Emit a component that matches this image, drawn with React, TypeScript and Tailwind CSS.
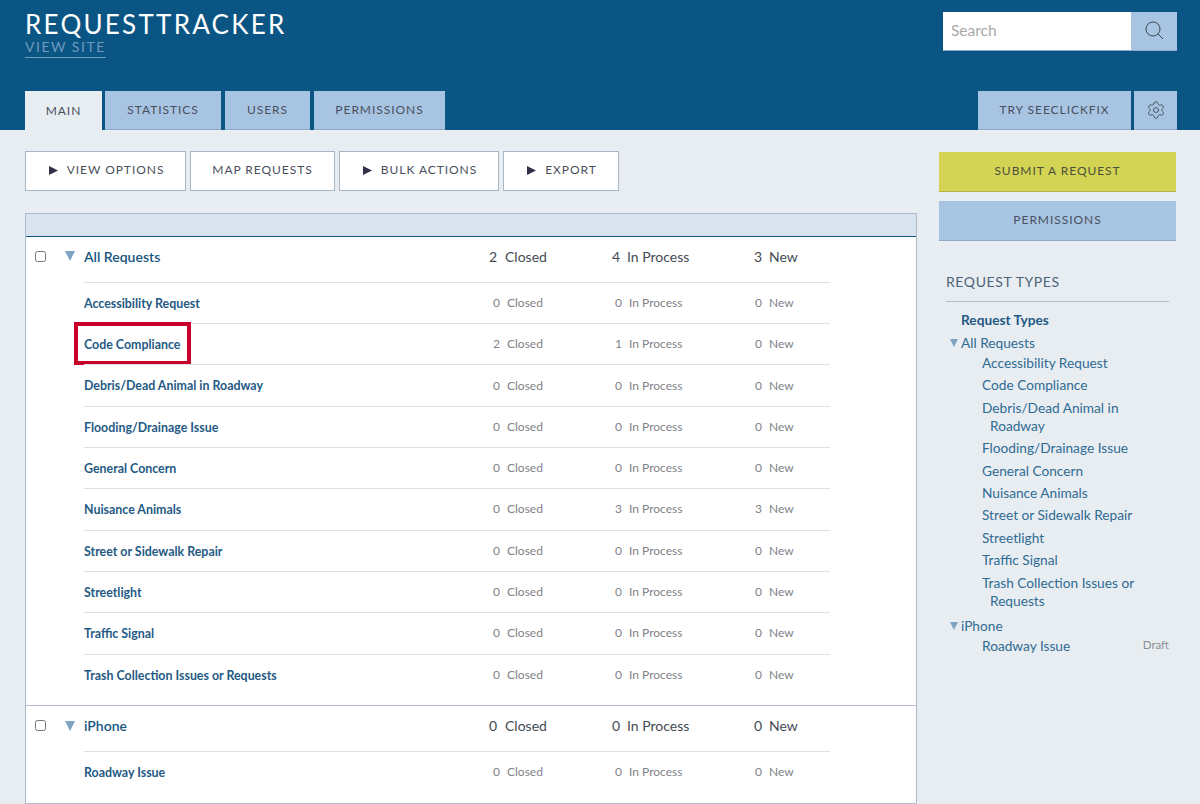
import { Settings } from "lucide-react";

const font = "font-['Lato','Noto_Sans',sans-serif]";

const allRequests = [
  ["Accessibility Request", 0, 0, 0],
  ["Code Compliance", 2, 1, 0],
  ["Debris/Dead Animal in Roadway", 0, 0, 0],
  ["Flooding/Drainage Issue", 0, 0, 0],
  ["General Concern", 0, 0, 0],
  ["Nuisance Animals", 0, 3, 3],
  ["Street or Sidewalk Repair", 0, 0, 0],
  ["Streetlight", 0, 0, 0],
  ["Traffic Signal", 0, 0, 0],
  ["Trash Collection Issues or Requests", 0, 0, 0],
] as [string, number, number, number][];

function Play() {
  return (
    <svg width="9" height="9" viewBox="0 0 9 9" className="shrink-0">
      <path d="M0 0 L9 4.5 L0 9 Z" fill="#33304a" />
    </svg>
  );
}

function Down({ small }: { small?: boolean }) {
  return (
    <svg width={small ? 8 : 10} height={small ? 8 : 10} viewBox="0 0 10 10">
      <path d="M0 0 H10 L5 10 Z" fill="#7fa3c2" />
    </svg>
  );
}

function Tab({ label, active, className }: { label: string; active?: boolean; className: string }) {
  return (
    <div
      className={`h-[39px] flex items-center justify-center text-[12px] tracking-[0.95px] text-[#4a4f5c] ${
        active ? "bg-[#e8edf2]" : "bg-[#a7c5e3] border-b border-[#8ea9c8]"
      } ${className}`}
    >
      {label}
    </div>
  );
}

function ToolButton({ label, arrow, className }: { label: string; arrow?: boolean; className: string }) {
  return (
    <div
      className={`h-10 pb-[2px] bg-white border border-[#a9b6c6] flex items-center justify-center gap-[9px] text-[12px] tracking-[0.95px] text-[#4a4f5c] ${arrow ? "pl-[2px]" : ""} ${className}`}
    >
      {arrow && <Play />}
      {label}
    </div>
  );
}

function GroupRow({ name, closed, process, fresh }: { name: string; closed: number; process: number; fresh: number }) {
  return (
    <div className="h-[44.7px] pb-[6px] flex items-center text-[14px] text-[#444b55]">
      <input type="checkbox" className="ml-[9px] w-[11px] h-[11px] shrink-0" />
      <span className="ml-[19px] w-[10px] flex"><Down /></span>
      <span className="ml-[9px] w-[397px] font-semibold text-[#17567f] whitespace-nowrap">{name}</span>
      <span className="w-[16px] text-right">{closed}</span>
      <span className="ml-2 w-[99px]">Closed</span>
      <span className="w-[16px] text-right">{process}</span>
      <span className="ml-[7px] w-[119px] whitespace-nowrap">In Process</span>
      <span className="w-[16px] text-right">{fresh}</span>
      <span className="ml-[7px]">New</span>
    </div>
  );
}

function SubRow({ name, closed, process, fresh, marked }: { name: string; closed: number; process: number; fresh: number; marked?: boolean }) {
  return (
    <div className="relative h-[41.33px] w-[746px] flex items-center border-t border-[#d8e0e8] text-[12px] text-[#7f8287]">
      <span className="w-[402px] pt-[2px] font-bold text-[12.4px] text-[#1f5a85] whitespace-nowrap">{name}</span>
      <span className="w-[14px] text-right">{closed}</span>
      <span className="ml-[7px] w-[101px]">Closed</span>
      <span className="w-[14px] text-right">{process}</span>
      <span className="ml-[7px] w-[119px] whitespace-nowrap">In Process</span>
      <span className="w-[14px] text-right">{fresh}</span>
      <span className="ml-[7px]">New</span>
      {marked && <div className="absolute left-[-10px] top-[-2px] w-[117px] h-[43px] border-4 border-[#c8002b]" />}
    </div>
  );
}

function Side({ children, wrap }: { children: string; wrap?: boolean }) {
  return (
    <div className={`ml-[21px] mb-[4.4px] leading-[18px] ${wrap ? "pl-2 -indent-2" : ""}`}>{children}</div>
  );
}

export default function App() {
  return (
    <div className={`${font} w-[1200px] h-[804px] overflow-hidden bg-[#e8edf2]`}>
      <header className="h-[130px] bg-[#0b5585] px-[25px] flex flex-col justify-between">
        <div className="flex justify-between items-start">
          <div>
            <div className="mt-[9px] text-[26px] leading-[30px] tracking-[2.25px] text-white">REQUESTTRACKER</div>
            <div className="w-fit text-[14px] leading-[16px] pb-[2px] tracking-[1.5px] text-[#6f9cbd] border-b border-[#6f9cbd]">VIEW SITE</div>
          </div>
          <div className="mt-3 mr-[-2px] flex h-[39px]">
            <div className="w-[188px] bg-white border-b border-[#8ea9c8] pl-2 pb-[1px] flex items-center text-[15.5px] text-[#a9a9a9]">Search</div>
            <div className="w-[46px] bg-[#a7c5e3] border-b border-[#8ea9c8] flex items-center justify-center">
              <svg width="20" height="20" viewBox="0 0 20 20" fill="none" stroke="#3c4650" strokeWidth="1" className="ml-[2px]">
                <circle cx="8" cy="8" r="7" />
                <path d="M13 13 L18 18" />
              </svg>
            </div>
          </div>
        </div>
        <div className="flex justify-between">
          <div className="flex">
            <Tab label="MAIN" active className="w-[77px]" />
            <Tab label="STATISTICS" className="ml-[3px] w-[116px]" />
            <Tab label="USERS" className="ml-1 w-[85px]" />
            <Tab label="PERMISSIONS" className="ml-1 w-[131px]" />
          </div>
          <div className="flex mr-[-2px]">
            <Tab label="TRY SEECLICKFIX" className="w-[153px]" />
            <div className="ml-[3px] w-[43px] h-[39px] bg-[#a7c5e3] border-b border-[#8ea9c8] flex items-center justify-center">
              <Settings size={20} strokeWidth={1} color="#3c4650" />
            </div>
          </div>
        </div>
      </header>

      <div className="flex pl-[25px]">
        <main className="w-[892px]">
          <div className="mt-[21px] flex gap-1">
            <ToolButton label="VIEW OPTIONS" arrow className="w-[161px]" />
            <ToolButton label="MAP REQUESTS" className="w-[145px]" />
            <ToolButton label="BULK ACTIONS" arrow className="w-[160px]" />
            <ToolButton label="EXPORT" arrow className="w-[116px]" />
          </div>

          <div className="mt-[22px] border border-[#b0bccd] bg-white">
            <div className="h-[22px] bg-[#d9e3ef] border-b border-[#0b5585] box-content" />
            <GroupRow name="All Requests" closed={2} process={4} fresh={3} />
            <div className="ml-[58px] pb-[10.3px]">
              {allRequests.map(([name, c, p, n]) => (
                <SubRow key={name} name={name} closed={c} process={p} fresh={n} marked={name === "Code Compliance"} />
              ))}
            </div>
            <div className="border-t border-[#b0bccd]">
              <GroupRow name="iPhone" closed={0} process={0} fresh={0} />
              <div className="ml-[58px] pb-[11px]">
                <SubRow name="Roadway Issue" closed={0} process={0} fresh={0} />
              </div>
            </div>
          </div>
        </main>

        <aside className="ml-[22px] w-[237px]">
          <div className="mt-[22px] h-10 pb-[2px] bg-[#d4d454] border-b border-[#b5b548] flex items-center justify-center text-[12px] tracking-[0.95px] text-[#4a4f3c]">SUBMIT A REQUEST</div>
          <div className="mt-[9px] h-10 pb-[2px] bg-[#a7c5e3] border-b border-[#8ea9c8] flex items-center justify-center text-[12px] tracking-[0.95px] text-[#4a4f5c]">PERMISSIONS</div>

          <div className="mt-[32px] ml-[7px] w-[223px] pb-[10px] border-b border-[#b0bccd] text-[14px] leading-[18px] tracking-[0.6px] text-[#4c6478]">REQUEST TYPES</div>
          <div className="ml-[7px] w-[223px] text-[13.7px] text-[#2f6b92]">
            <div className="mt-[9px] ml-[15px] leading-[18px] font-bold text-[#1f5a85]">Request Types</div>
            <div className="mt-[5px] mb-[2px] leading-[18px] flex items-center"><span className="ml-[4px] w-[11px] flex"><Down small /></span>All Requests</div>
            <div className="ml-[15px]">
              <Side>Accessibility Request</Side>
              <Side>Code Compliance</Side>
              <Side wrap>Debris/Dead Animal in Roadway</Side>
              <Side>Flooding/Drainage Issue</Side>
              <Side>General Concern</Side>
              <Side>Nuisance Animals</Side>
              <Side>Street or Sidewalk Repair</Side>
              <Side>Streetlight</Side>
              <Side>Traffic Signal</Side>
              <Side wrap>Trash Collection Issues or Requests</Side>
            </div>
            <div className="mt-[7px] leading-[18px] flex items-center"><span className="ml-[4px] w-[11px] flex"><Down small /></span>iPhone</div>
            <div className="ml-[15px] mt-[2px] flex justify-between items-center">
              <span className="ml-[21px] leading-[18px]">Roadway Issue</span>
              <span className="text-[11.5px] text-[#8a8f94] -mt-[2px]">Draft</span>
            </div>
          </div>
        </aside>
      </div>
    </div>
  );
}
